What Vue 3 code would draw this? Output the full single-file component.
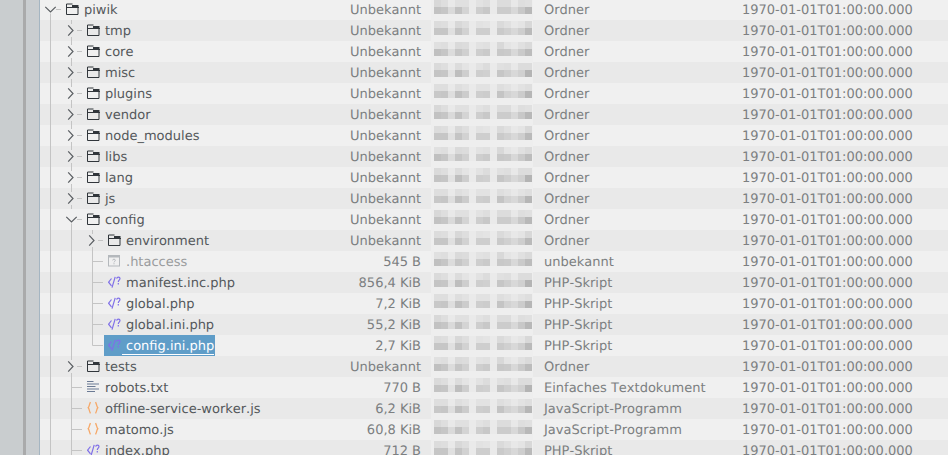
<script setup>
const source = [
  ['piwik', 0, 'open', 'folder', 'Unbekannt', 'Ordner'],
  ['tmp', 1, 'closed', 'folder', 'Unbekannt', 'Ordner'],
  ['core', 1, 'closed', 'folder', 'Unbekannt', 'Ordner'],
  ['misc', 1, 'closed', 'folder', 'Unbekannt', 'Ordner'],
  ['plugins', 1, 'closed', 'folder', 'Unbekannt', 'Ordner'],
  ['vendor', 1, 'closed', 'folder', 'Unbekannt', 'Ordner'],
  ['node_modules', 1, 'closed', 'folder', 'Unbekannt', 'Ordner'],
  ['libs', 1, 'closed', 'folder', 'Unbekannt', 'Ordner'],
  ['lang', 1, 'closed', 'folder', 'Unbekannt', 'Ordner'],
  ['js', 1, 'closed', 'folder', 'Unbekannt', 'Ordner'],
  ['config', 1, 'open', 'folder', 'Unbekannt', 'Ordner'],
  ['environment', 2, 'closed', 'folder', 'Unbekannt', 'Ordner'],
  ['.htaccess', 2, 'leaf', 'unknown', '545 B', 'unbekannt'],
  ['manifest.inc.php', 2, 'leaf', 'php', '856,4 KiB', 'PHP-Skript'],
  ['global.php', 2, 'leaf', 'php', '7,2 KiB', 'PHP-Skript'],
  ['global.ini.php', 2, 'leaf', 'php', '55,2 KiB', 'PHP-Skript'],
  ['config.ini.php', 2, 'last', 'php', '2,7 KiB', 'PHP-Skript'],
  ['tests', 1, 'closed', 'folder', 'Unbekannt', 'Ordner'],
  ['robots.txt', 1, 'leaf', 'text', '770 B', 'Einfaches Textdokument'],
  ['offline-service-worker.js', 1, 'leaf', 'js', '6,2 KiB', 'JavaScript-Programm'],
  ['matomo.js', 1, 'leaf', 'js', '60,8 KiB', 'JavaScript-Programm'],
  ['index.php', 1, 'leaf', 'php', '712 B', 'PHP-Skript'],
]

const upper = [220, 220, 233, 220, 224, 234, 224, 224, 234, 220, 224, 232, 224, 220]
const lower = [196, 196, 222, 194, 208, 234, 204, 204, 234, 200, 206, 214, 204, 184]

function jitter(row, cell) {
  return ((row * 7 + cell * 13 + row * cell * 3) % 5) * 2 - 4
}

function blurCells(row) {
  const make = (base, r) => base.map((v, c) => {
    const g = v >= 230 ? v : v + jitter(r, c)
    return `rgb(${g},${g},${g})`
  })
  return [...make(upper, row), ...make(lower, row + 3)]
}

const rows = source.map(([name, depth, kind, icon, size, type], i) => ({
  name, depth, kind, icon, size, type,
  blur: blurCells(i),
  dim: icon === 'unknown',
  selected: name === 'config.ini.php',
}))
</script>

<template>
  <div class="window">
    <aside class="rail">
      <div class="rail-a"></div>
      <div class="rail-b"></div>
      <div class="rail-c"></div>
    </aside>
    <div class="list">
      <div v-for="(r, i) in rows" :key="r.name" class="row" :class="{ odd: i % 2 === 1 }">
        <div class="tree">
          <span v-for="n in r.depth" :key="n" class="guide"></span>
          <svg class="exp" viewBox="0 0 21 21" width="21" height="21">
            <g v-if="r.kind === 'leaf' || r.kind === 'last'" fill="none" stroke="#c4c4c4">
              <path :d="r.kind === 'last' ? 'M10.5 0V10.5H21' : 'M10.500 0V21M10.500 10.500H21'" />
            </g>
            <g v-else-if="r.kind === 'closed'" fill="none">
              <path d="M10.500 0V4M10.500 17V21M16 10.500H21" stroke="#c4c4c4" />
              <path d="M7.200 5.300L12 10.500 7.200 15.700" stroke="#5a5e62" stroke-width="1.200" />
            </g>
            <g v-else fill="none">
              <path d="M10.500 14.500V21M16 10.500H21" stroke="#c4c4c4" />
              <path d="M5.300 7.800L10.500 13 15.700 7.800" stroke="#5a5e62" stroke-width="1.200" />
            </g>
          </svg>
          <div class="item" :class="{ sel: r.selected, dim: r.dim }">
            <svg class="icon" viewBox="0 0 14 14" width="14" height="14">
              <g v-if="r.icon === 'folder'" fill="none" stroke="#31363b">
                <path d="M.5 2h6M.5 2v10.500h11.500V5.500" />
                <path d="M0 5h13v1H0zM6 3h6.500v2.500H6z" fill="#31363b" stroke="none" />
              </g>
              <g v-else-if="r.icon === 'unknown'" fill="none" stroke="#b4b8bc">
                <rect x=".5" y="1.500" width="11" height="10.500" />
                <path d="M0 1h12v2.500H0z" fill="#b4b8bc" stroke="none" />
                <path d="M4.700 6.400c0-1.700 2.600-1.700 2.600 0 0 1-1.300 1-1.300 2M6 9.200v1.100" />
              </g>
              <g v-else-if="r.icon === 'php'" fill="none" stroke="#7f6fe8" stroke-width="1.200">
                <path d="M3.500 3.500L.6 7.200 3.500 10.900M7.200 1.800L4 12.700" />
                <path d="M8.700 3.600c.2-2 3.300-2 3.300 0 0 1.600-1.700 1.600-1.700 3.300M10.300 8v1.400" />
              </g>
              <g v-else-if="r.icon === 'js'" fill="none" stroke="#f6a868" stroke-width="1.300">
                <path d="M3.500 1.200C2.200 3.300 2.400 5.500 1.200 6.800 2.400 8.100 2.200 10.300 3.500 12.400" />
                <path d="M8.500 1.200C9.800 3.300 9.600 5.500 10.800 6.800 9.600 8.100 9.800 10.300 8.500 12.400" />
              </g>
              <g v-else fill="none" stroke="#6b7a94">
                <path d="M0 1.500h6.500M0 4h12M0 6.500h8.500M0 9h12M0 11.500h8" />
              </g>
            </svg>
            <span class="name">{{ r.name }}</span>
          </div>
        </div>
        <div class="size">{{ r.size }}</div>
        <div class="blur">
          <div class="blur-grid">
            <i v-for="(c, k) in r.blur" :key="k" :style="{ background: c }"></i>
          </div>
        </div>
        <div class="type">{{ r.type }}</div>
        <div class="date">1970-01-01T01:00:00.000</div>
      </div>
    </div>
  </div>
</template>

<style>
html, body { margin: 0; overflow: hidden; background: #f0f0f0; }
</style>

<style scoped>
.window {
  width: 948px;
  height: 455px;
  display: flex;
  overflow: hidden;
  font-family: "DejaVu Sans", sans-serif;
  font-size: 13px;
  font-kerning: none;
  text-rendering: geometricPrecision;
  color: #7c7f81;
  background: #f0f0f0;
}
.rail { display: flex; flex: none; width: 40px; }
.rail-a { width: 23px; background: #c9cdcf; }
.rail-b { width: 3px; background: #a9aaab; }
.rail-c { width: 13px; background: #c9cdd0; border-right: 1px solid #a4b5c2; }
.list { flex: 1; min-width: 0; margin-top: -1px; }
.row {
  display: flex;
  height: 21px;
  line-height: 23px;
  background: #f0f0f0;
  white-space: nowrap;
}
.row.odd { background: #e9e9e9; }
.tree { display: flex; width: 300px; flex: none; color: #54585b; }
.guide {
  width: 21px;
  flex: none;
  background: linear-gradient(#c4c4c4, #c4c4c4) 10px 0 / 1px 100% no-repeat;
}
.exp { flex: none; display: block; }
.item {
  display: flex;
  align-items: flex-start;
  height: 21px;
  margin-left: 1px;
  padding: 0 1px 0 4px;
}
.item.dim { color: #9a9c9e; }
.item.sel { background: #5f9dc8; color: #fff; }
.item.sel .name { border-bottom: 1px solid #fff; height: 19px; }
.icon { flex: none; display: block; margin-top: 3px; }
.name { padding-left: 4px; }
.size { width: 81px; flex: none; text-align: right; }
.blur {
  width: 102px;
  height: 21px;
  flex: none;
  margin-left: 10px;
  padding: 1px 0 0 3px;
  box-sizing: border-box;
  background: #eeeeee;
}
.blur-grid {
  display: grid;
  grid-template-columns: repeat(14, 7px);
  grid-auto-rows: 7px;
}
.type { width: 198px; flex: none; margin-left: 11px; }
.date { flex: none; }
</style>
